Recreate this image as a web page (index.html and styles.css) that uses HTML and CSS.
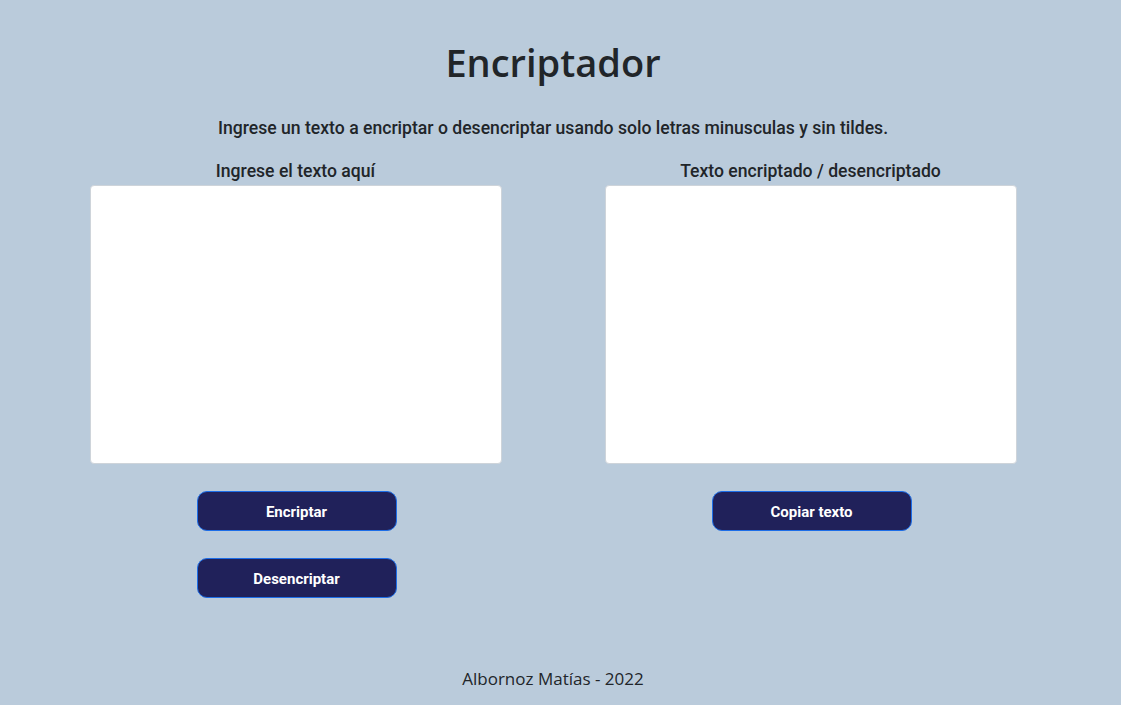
FILE: index.html
```html
<!DOCTYPE html>
<html lang="es">
<head>
<meta charset="utf-8">
<title>Encriptador</title>
<link rel="stylesheet" href="styles.css">
</head>
<body>
<div class="page">
  <header class="header">
    <h1 class="title">Encriptador</h1>
    <p class="subtitle">Ingrese un texto a encriptar o desencriptar usando solo letras minusculas y sin tildes.</p>
  </header>
  <main class="columns">
    <section class="column">
      <label class="label" for="input">Ingrese el texto aquí</label>
      <textarea class="box" id="input"></textarea>
      <div class="actions">
        <button class="btn">Encriptar</button>
        <button class="btn">Desencriptar</button>
      </div>
    </section>
    <section class="column">
      <label class="label" for="output">Texto encriptado / desencriptado</label>
      <textarea class="box" id="output" readonly></textarea>
      <div class="actions">
        <button class="btn">Copiar texto</button>
      </div>
    </section>
  </main>
  <footer class="footer">Albornoz Matías - 2022</footer>
</div>
</body>
</html>
```

FILE: styles.css
```css
html, body {
  margin: 0;
  padding: 0;
  background: #bacbdb;
}

body {
  height: 705px;
  overflow: hidden;
  color: #212529;
}

.page {
  width: 1106px;
  display: flex;
  flex-direction: column;
  align-items: center;
}

.header {
  display: flex;
  flex-direction: column;
  align-items: center;
}

.title {
  margin: 38px 0 0;
  font-family: "Open Sans", sans-serif;
  font-weight: 600;
  font-size: 38px;
  line-height: 48px;
}

.subtitle {
  margin: 30px 0 0;
  font-family: Roboto, sans-serif;
  font-weight: 500;
  font-size: 17.6px;
  line-height: 24px;
}

.columns {
  display: grid;
  grid-template-columns: 412px 412px;
  column-gap: 103px;
  margin-top: 19px;
}

.column {
  display: flex;
  flex-direction: column;
  align-items: center;
}

.label {
  font-family: Roboto, sans-serif;
  font-weight: 500;
  font-size: 17.6px;
  line-height: 24px;
}

.box {
  box-sizing: border-box;
  margin-top: 2px;
  width: 412px;
  height: 279px;
  background: #ffffff;
  border: 1px solid #ced4da;
  border-radius: 4px;
  resize: none;
  padding: 6px 12px;
  font-family: Roboto, sans-serif;
  font-size: 16px;
}

.actions {
  margin-top: 27px;
  padding-left: 2px;
  display: flex;
  flex-direction: column;
  align-items: center;
  gap: 27px;
}

.btn {
  box-sizing: border-box;
  width: 200px;
  height: 40px;
  background: #20215a;
  color: #ffffff;
  border: 1px solid #1d6ee8;
  border-radius: 10px;
  font-family: Roboto, sans-serif;
  font-weight: 700;
  font-size: 15px;
  padding: 1px 0 0;
  cursor: pointer;
}

.footer {
  margin-top: 69px;
  font-family: "Open Sans", sans-serif;
  font-size: 17px;
  line-height: 24px;
}
```
